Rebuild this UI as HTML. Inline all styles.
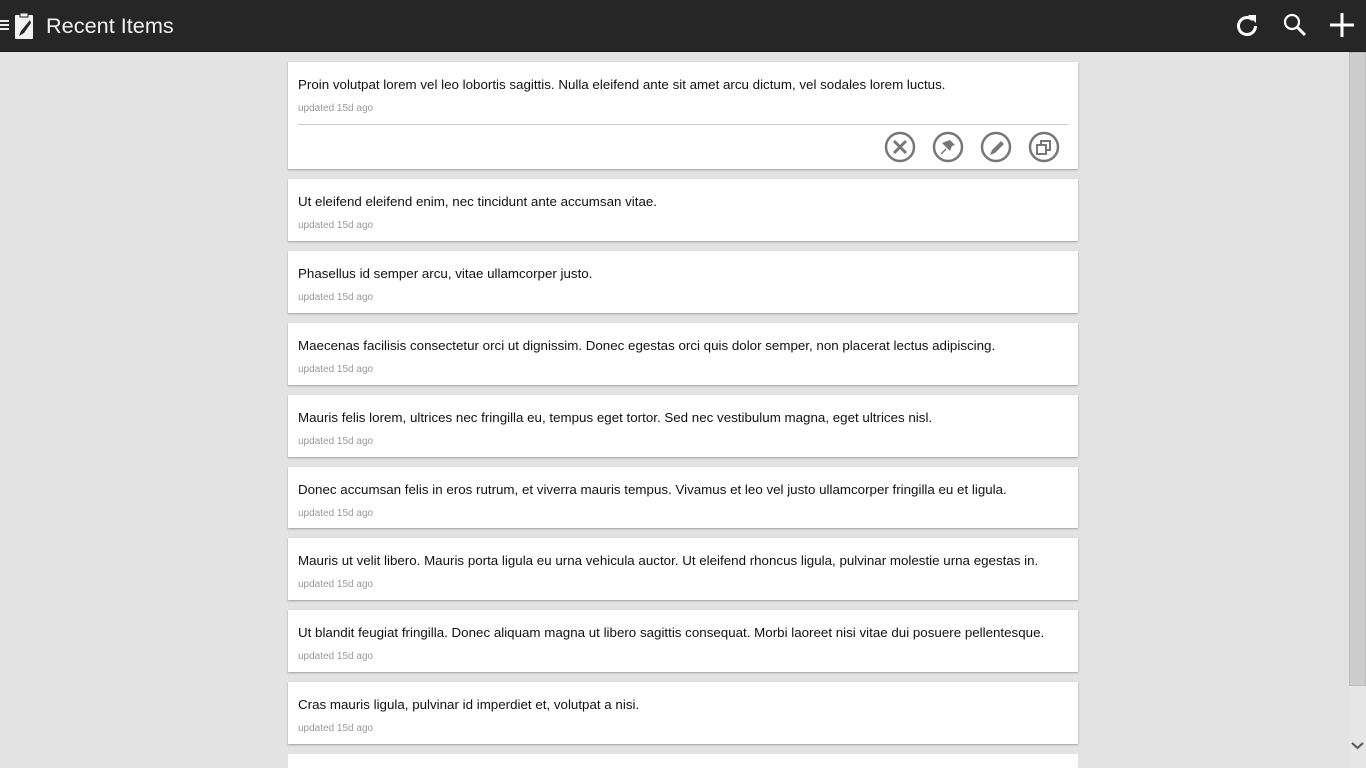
<!DOCTYPE html>
<html><head><meta charset="utf-8"><style>
*{box-sizing:border-box;margin:0;padding:0}
html,body{width:1366px;height:768px;overflow:hidden}
body{background:#e3e3e3;font-family:"Liberation Sans",Arial,sans-serif;position:relative}
.hdr{position:absolute;left:0;top:0;width:1366px;height:52px;background:#262626;border-bottom:1px solid #1a1a1a}
.title{position:absolute;left:46px;top:13px;color:#f2f2f2;font-size:21.7px}
.card{position:absolute;left:288px;width:790px;background:#fff;box-shadow:0 1px 2px rgba(0,0,0,.3);overflow:hidden}
.t{position:absolute;left:10px;top:15px;font-size:13.35px;color:#111;white-space:nowrap}
.u{position:absolute;left:10px;top:41px;font-size:10px;color:#9a9a9a}
.sb{position:absolute;left:1349px;top:52px;width:17px;height:716px;background:#e6e6e6}
.th{position:absolute;left:1349px;top:52px;width:17px;height:634px;background:#cdcdcd;border:1px solid #bdbdbd}
</style></head><body>
<div class="hdr">
<svg style="position:absolute;left:0;top:12px" width="40" height="30" viewBox="0 0 40 30">
<rect x="0" y="8" width="9" height="2" fill="#eee"/><rect x="0" y="12" width="9" height="2" fill="#eee"/><rect x="0" y="16" width="9" height="2" fill="#eee"/>
<rect x="15" y="3" width="18" height="24" rx="1" fill="#f2f2f2"/><rect x="20" y="1" width="8" height="4" fill="#f2f2f2" stroke="#262626" stroke-width="1"/>
<path d="M30 8 L21 19 L19 24 L24 21 L31 11 Z" fill="#262626"/>
</svg>
<div class="title">Recent Items</div>
<svg style="position:absolute;left:1234px;top:12px" width="26" height="26" viewBox="0 0 26 26"><path d="M19 8 A8.5 8.5 0 1 0 21.5 14" fill="none" stroke="#fff" stroke-width="3"/><path d="M14 3 L22 3 L22 11 Z" fill="#fff"/></svg>
<svg style="position:absolute;left:1282px;top:12px" width="26" height="26" viewBox="0 0 26 26"><circle cx="10" cy="10" r="7" fill="none" stroke="#fff" stroke-width="2.2"/><path d="M15 15 L23 23" stroke="#fff" stroke-width="3"/></svg>
<svg style="position:absolute;left:1329px;top:12px" width="26" height="26" viewBox="0 0 26 26"><path d="M13 1V25M1 13H25" stroke="#fff" stroke-width="3"/></svg>
</div>
<div class="card" style="top:62px;height:107px">
<div class="t">Proin volutpat lorem vel leo lobortis sagittis. Nulla eleifend ante sit amet arcu dictum, vel sodales lorem luctus.</div>
<div class="u">updated 15d ago</div>
<div style="position:absolute;left:10px;right:10px;top:62px;height:1px;background:#ccc"></div>
<svg style="position:absolute;left:596px;top:69px" width="184" height="32" viewBox="0 0 184 32">
<g fill="none" stroke="#777" stroke-width="2.5">
<circle cx="16" cy="16" r="14"/><circle cx="64" cy="16" r="14"/><circle cx="112" cy="16" r="14"/><circle cx="160" cy="16" r="14"/>
<path d="M10 10L22 22M22 10L10 22" stroke-width="3"/>
<rect x="153" y="14" width="9" height="9" stroke-width="2"/><path d="M157 14V10H166V19H162" stroke-width="2"/>
</g>
<path d="M62 18L57 23" stroke="#777" stroke-width="1.5"/>
<path d="M66 9L71 14L68 15L66 20L58 12L63 10Z" fill="#777"/>
<path d="M106 24L108 19L117 10L120 13L111 22Z" fill="#777"/>
</svg>
</div>
<div class="card" style="top:179px;height:62px"><div class="t">Ut eleifend eleifend enim, nec tincidunt ante accumsan vitae.</div><div class="u">updated 15d ago</div></div>
<div class="card" style="top:251px;height:62px"><div class="t">Phasellus id semper arcu, vitae ullamcorper justo.</div><div class="u">updated 15d ago</div></div>
<div class="card" style="top:323px;height:62px"><div class="t">Maecenas facilisis consectetur orci ut dignissim. Donec egestas orci quis dolor semper, non placerat lectus adipiscing.</div><div class="u">updated 15d ago</div></div>
<div class="card" style="top:395px;height:62px"><div class="t">Mauris felis lorem, ultrices nec fringilla eu, tempus eget tortor. Sed nec vestibulum magna, eget ultrices nisl.</div><div class="u">updated 15d ago</div></div>
<div class="card" style="top:467px;height:61px"><div class="t">Donec accumsan felis in eros rutrum, et viverra mauris tempus. Vivamus et leo vel justo ullamcorper fringilla eu et ligula.</div><div class="u">updated 15d ago</div></div>
<div class="card" style="top:538px;height:62px"><div class="t">Mauris ut velit libero. Mauris porta ligula eu urna vehicula auctor. Ut eleifend rhoncus ligula, pulvinar molestie urna egestas in.</div><div class="u">updated 15d ago</div></div>
<div class="card" style="top:610px;height:62px"><div class="t">Ut blandit feugiat fringilla. Donec aliquam magna ut libero sagittis consequat. Morbi laoreet nisi vitae dui posuere pellentesque.</div><div class="u">updated 15d ago</div></div>
<div class="card" style="top:682px;height:62px"><div class="t">Cras mauris ligula, pulvinar id imperdiet et, volutpat a nisi.</div><div class="u">updated 15d ago</div></div>
<div class="card" style="top:754px;height:14px;box-shadow:none"></div>
<div class="sb"></div><div class="th"></div>
<svg style="position:absolute;left:1351px;top:741px" width="13" height="10" viewBox="0 0 13 10"><path d="M1 2L6.5 7L12 2" fill="none" stroke="#555" stroke-width="2"/></svg>
</body></html>
